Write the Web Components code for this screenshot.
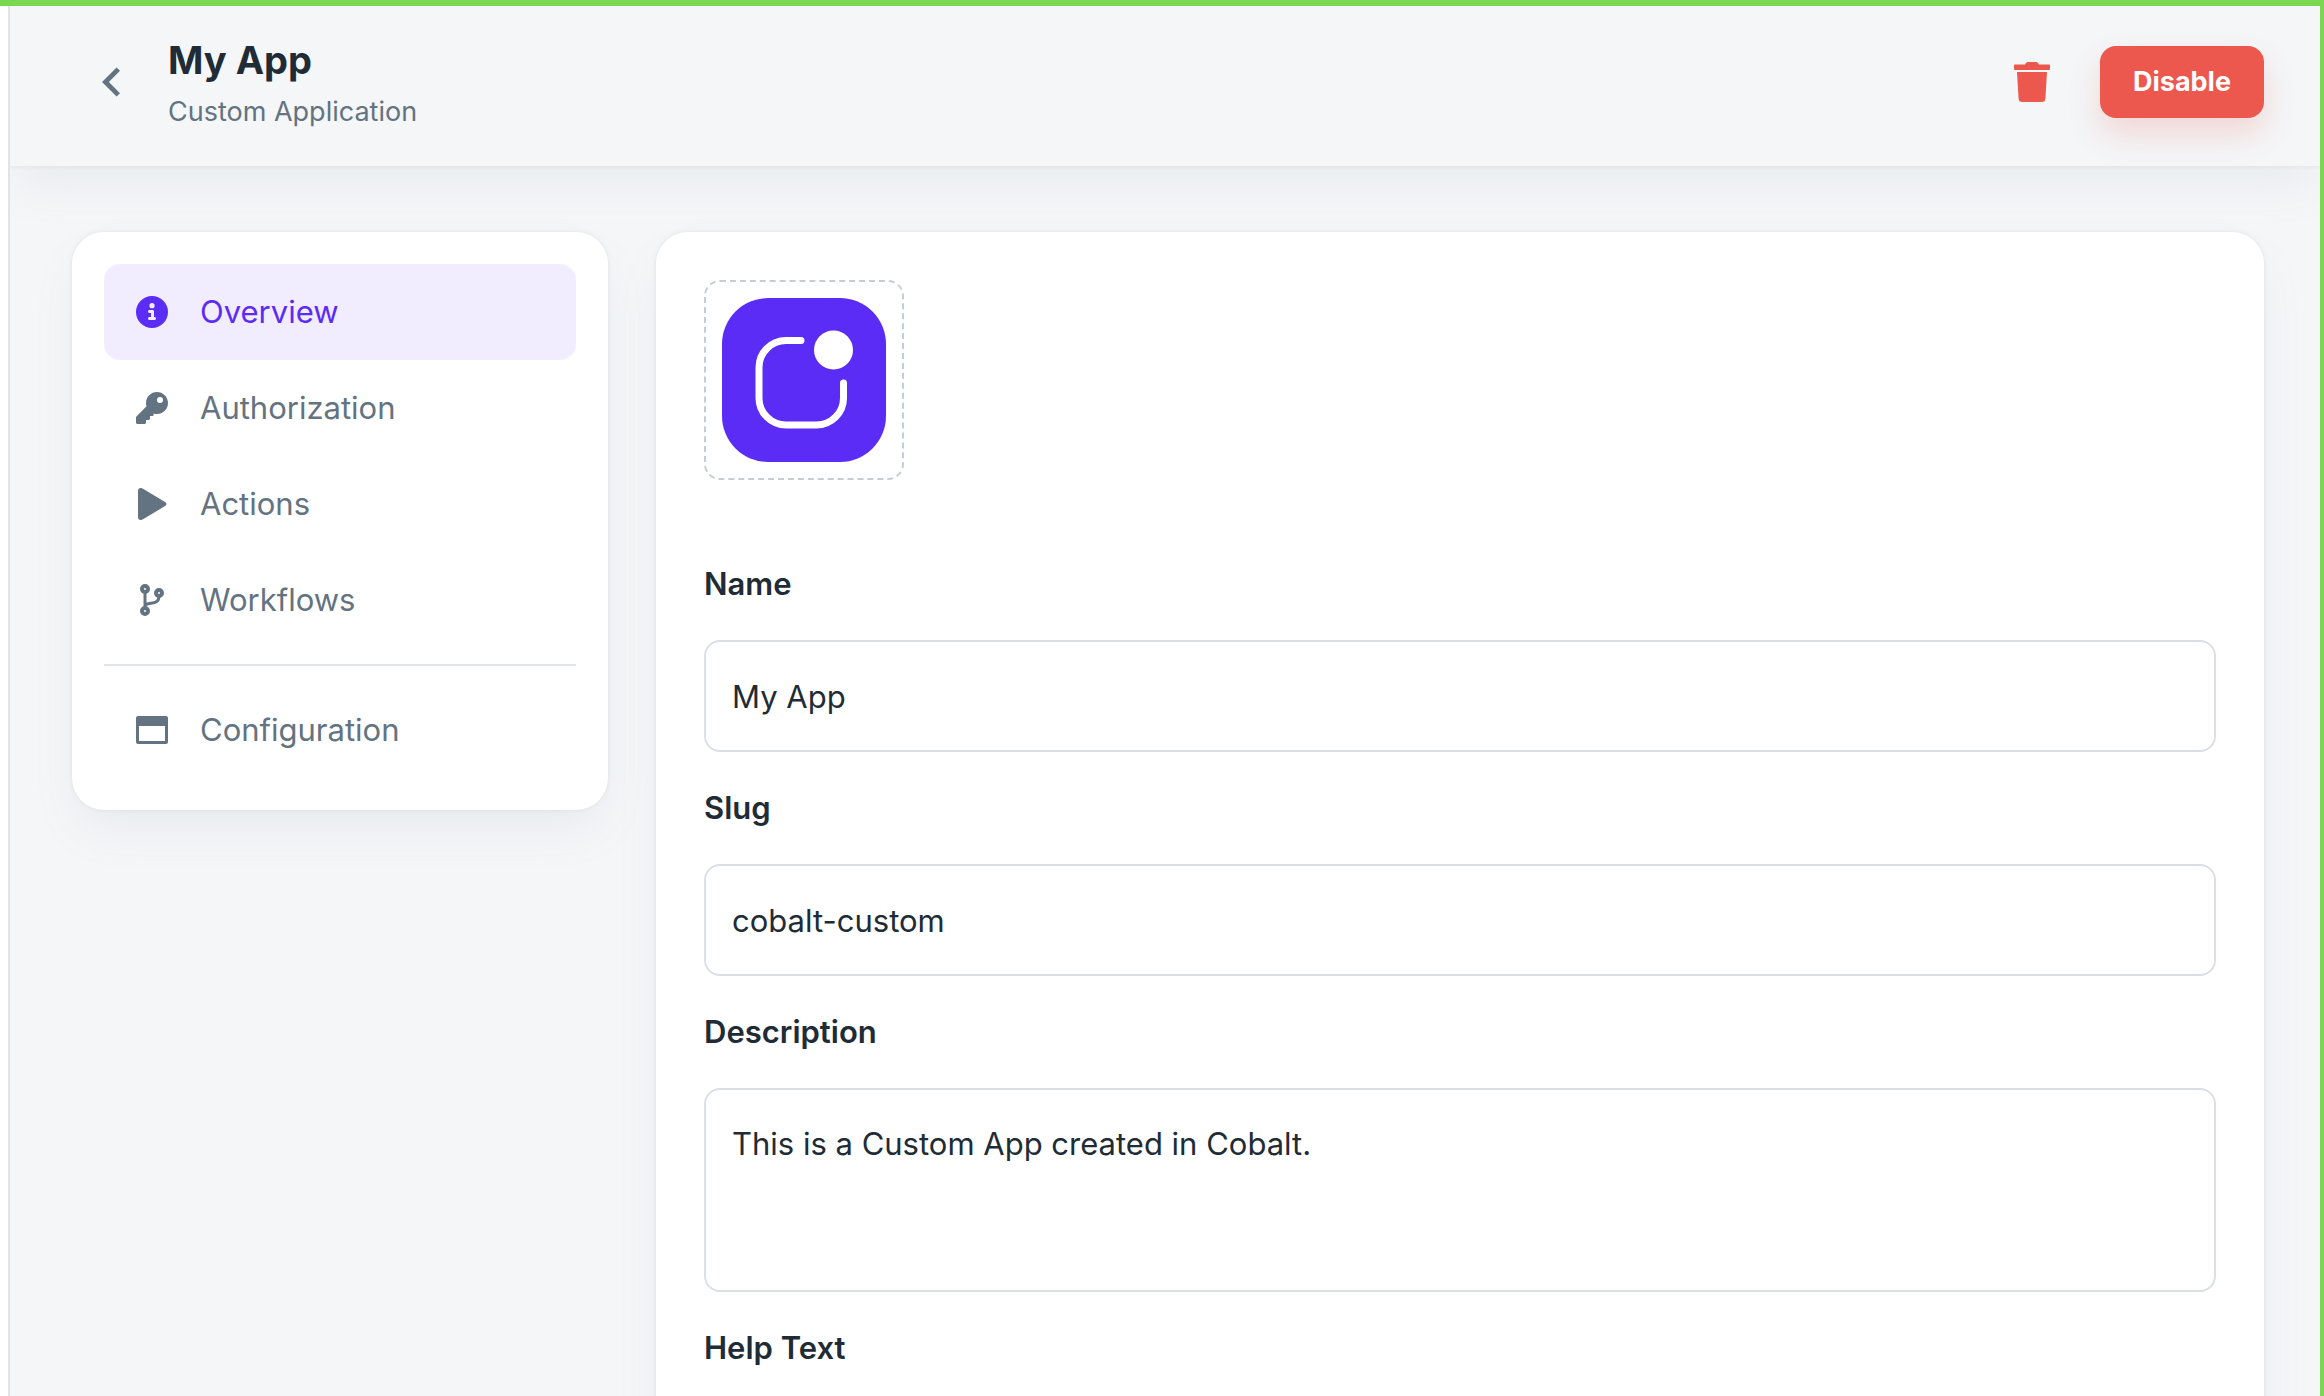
<!DOCTYPE html>
<html lang="en">
<head>
<meta charset="utf-8">
<title>My App</title>
<style>
  :root {
    --bg: #f4f6f8;
    --surface: #ffffff;
    --fg: #212b36;
    --fg-muted: #637381;
    --divider: #dfe4e9;
    --border: #dce0e4;
    --accent: #5b2cf6;
    --accent-soft: #f2edfe;
    --danger: #ec584d;
    --frame: #7bd651;
    --radius-md: 16px;
    --radius-lg: 32px;
    --shadow: 0 0 4px rgba(145, 158, 171, 0.2), 0 24px 48px -8px rgba(145, 158, 171, 0.12);
  }
  body {
    margin: 0;
    color: var(--fg);
    font-family: Inter, "Liberation Sans", sans-serif;
    font-size: 31px;
    line-height: 48px;
  }
</style>
</head>
<body>
<app-shell>
  <app-header slot="header" heading="My App" subheading="Custom Application"></app-header>
  <side-nav slot="nav">
    <nav-item icon="info" href="#overview" active>Overview</nav-item>
    <nav-item icon="key" href="#authorization">Authorization</nav-item>
    <nav-item icon="play" href="#actions">Actions</nav-item>
    <nav-item icon="branch" href="#workflows">Workflows</nav-item>
    <hr>
    <nav-item icon="window" href="#configuration">Configuration</nav-item>
  </side-nav>
  <app-form>
    <app-logo></app-logo>
    <text-field label="Name" value="My App"></text-field>
    <text-field label="Slug" value="cobalt-custom"></text-field>
    <text-field label="Description" value="This is a Custom App created in Cobalt." multiline></text-field>
    <text-field label="Help Text" value="" multiline></text-field>
  </app-form>
</app-shell>

<script>
const ICONS = {
  back: ['8 6 7.41 12', '<path d="M15.41 16.59 10.83 12l4.58-4.59L14 6l-6 6 6 6z"/>'],
  trash: ['0 0 36 40', '<path d="M1 2.500h10l1-1.500q.6-1 2-1h8q1.400 0 2 1l1 1.500h10q1 0 1 1v3.500q0 1-1 1H1Q0 8 0 7V3.500q0-1 1-1zM3 10h30l-1.600 26.500q-.3 3.500-3.500 3.500H8.100q-3.200 0-3.500-3.500z"/>'],
  info: ['0 0 512 512', '<path d="M256 512a256 256 0 1 0 0-512 256 256 0 1 0 0 512zM216 336h24v-64h-24c-13.300 0-24-10.700-24-24s10.700-24 24-24h48c13.300 0 24 10.700 24 24v88h8c13.300 0 24 10.700 24 24s-10.700 24-24 24h-80c-13.300 0-24-10.700-24-24s10.700-24 24-24zm40-224a42 42 0 1 1 0 84 42 42 0 1 1 0-84z"/>'],
  key: ['0 0 512 512', '<path d="M336 352c97.200 0 176-78.800 176-176S433.200 0 336 0 160 78.800 160 176c0 18.700 2.900 36.800 8.300 53.700L7 391c-4.500 4.500-7 10.600-7 17v80c0 13.300 10.700 24 24 24h112c13.300 0 24-10.700 24-24v-40h40c13.300 0 24-10.700 24-24v-40h40c6.400 0 12.500-2.500 17-7l1.300-33.300c16.900 5.400 35 8.300 53.700 8.300zm48-272a48 48 0 1 1 0 96 48 48 0 1 1 0-96z"/>'],
  play: ['0 0 32 32', '<path d="M2 3Q2 0 4.800 0 6 0 7 .7l22 13.200q3 2.100 0 4.200L7 31.300q-1 .7-2.200.7Q2 32 2 29z"/>'],
  branch: ['0 0 32 32', '<g fill="none" stroke="currentColor" stroke-width="4"><circle cx="9" cy="5" r="3"/><circle cx="23" cy="9" r="3"/><circle cx="9" cy="27" r="3"/><path stroke-width="3" d="M9 8v16M23 12c0 9-9 6-14 9"/></g>'],
  window: ['0 0 32 32', '<path fill-rule="evenodd" d="M2 2h28q2 0 2 2v24q0 2-2 2H2q-2 0-2-2V4q0-2 2-2zm1 10v15h26V12z"/>']
};

function icon(name) {
  const [box, shape] = ICONS[name];
  return `<svg viewBox="${box}" fill="currentColor" aria-hidden="true">${shape}</svg>`;
}

class AppShell extends HTMLElement {
  connectedCallback() {
    this.attachShadow({ mode: 'open' }).innerHTML = `
      <style>
        :host {
          display: block;
          box-sizing: border-box;
          height: 100vh;
          overflow: hidden;
          padding-left: 8px;
          border-top: 6px solid var(--frame);
          border-right: 4px solid var(--frame);
          background: var(--surface);
        }
        .page {
          height: 100%;
          overflow: hidden;
          border-left: 2px solid var(--divider);
          background: var(--bg);
        }
        main {
          display: grid;
          grid-template-columns: 536px minmax(0, 1fr);
          align-items: start;
          gap: 48px;
          padding: 66px 56px 66px 62px;
        }
      </style>
      <div class="page">
        <slot name="header"></slot>
        <main>
          <slot name="nav"></slot>
          <slot></slot>
        </main>
      </div>
    `;
  }
}

class AppHeader extends HTMLElement {
  connectedCallback() {
    this.attachShadow({ mode: 'open' }).innerHTML = `
      <style>
        :host {
          display: flex;
          align-items: center;
          box-sizing: border-box;
          height: 160px;
          padding: 0 56px 8px 62px;
          background: var(--bg);
          box-shadow: var(--shadow);
        }
        button {
          border: 0;
          padding: 0;
          background: none;
          font: inherit;
          cursor: pointer;
        }
        svg { display: block; }
        .back {
          padding: 16px 30px;
          color: var(--fg-muted);
        }
        .back svg { width: 18px; height: 30px; }
        .titles {
          flex: 1;
          padding: 4px 0 0 18px;
        }
        h1 {
          margin: 0;
          font-size: 38px;
          font-weight: 700;
          line-height: 56px;
        }
        p {
          margin: 0;
          color: var(--fg-muted);
          font-size: 27px;
          line-height: 48px;
        }
        .trash {
          padding: 16px 20px;
          margin-right: 30px;
          color: var(--danger);
        }
        .trash svg { width: 36px; height: 40px; }
        .disable {
          min-width: 164px;
          height: 72px;
          padding: 0 32px;
          border-radius: var(--radius-md);
          background: var(--danger);
          box-shadow: 0 16px 32px rgba(236, 88, 77, 0.2);
          color: #fff;
          font-size: 27px;
          font-weight: 700;
        }
      </style>
      <button class="back" aria-label="Back">${icon('back')}</button>
      <div class="titles">
        <h1>${this.getAttribute('heading')}</h1>
        <p>${this.getAttribute('subheading')}</p>
      </div>
      <button class="trash" aria-label="Delete">${icon('trash')}</button>
      <button class="disable">Disable</button>
    `;
  }
}

class SideNav extends HTMLElement {
  connectedCallback() {
    this.attachShadow({ mode: 'open' }).innerHTML = `
      <style>
        :host {
          display: block;
          padding: 32px;
          border-radius: var(--radius-lg);
          background: var(--surface);
          box-shadow: var(--shadow);
        }
        ::slotted(hr) {
          height: 2px;
          margin: 16px 0;
          border: 0;
          background: var(--divider);
        }
      </style>
      <nav><slot></slot></nav>
    `;
  }
}

class NavItem extends HTMLElement {
  connectedCallback() {
    this.attachShadow({ mode: 'open' }).innerHTML = `
      <style>
        :host { display: block; }
        a {
          display: flex;
          align-items: center;
          gap: 32px;
          padding: 24px 32px;
          border-radius: var(--radius-md);
          color: var(--fg-muted);
          text-decoration: none;
        }
        :host([active]) a {
          background: var(--accent-soft);
          color: var(--accent);
        }
        svg { width: 32px; height: 32px; }
      </style>
      <a href="${this.getAttribute('href')}">${icon(this.getAttribute('icon'))}<slot></slot></a>
    `;
  }
}

class AppForm extends HTMLElement {
  connectedCallback() {
    this.attachShadow({ mode: 'open' }).innerHTML = `
      <style>
        :host {
          display: block;
          padding: 48px;
          border-radius: var(--radius-lg);
          background: var(--surface);
          box-shadow: var(--shadow);
        }
        form {
          display: flex;
          flex-direction: column;
          gap: 32px;
        }
      </style>
      <form><slot></slot></form>
    `;
  }
}

class AppLogo extends HTMLElement {
  connectedCallback() {
    this.attachShadow({ mode: 'open' }).innerHTML = `
      <style>
        :host {
          display: block;
          align-self: flex-start;
          padding: 16px;
          margin-bottom: 48px;
          border: 2px dashed #c4cdd5;
          border-radius: var(--radius-md);
        }
        svg {
          display: block;
          width: 164px;
          height: 164px;
        }
      </style>
      <svg viewBox="0 0 164 164" role="img" aria-label="App logo">
        <rect width="164" height="164" rx="46" fill="#5b2cf6"/>
        <path fill="none" stroke="#fff" stroke-width="7" stroke-linecap="round" d="M79 42.500H64a27 27 0 0 0-27 27V100a27 27 0 0 0 27 27h30.500a27 27 0 0 0 27-27V85"/>
        <circle cx="111.500" cy="52" r="19.500" fill="#fff"/>
      </svg>
    `;
  }
}

class TextField extends HTMLElement {
  connectedCallback() {
    const multiline = this.hasAttribute('multiline');
    this.attachShadow({ mode: 'open' }).innerHTML = `
      <style>
        :host {
          display: flex;
          flex-direction: column;
          gap: 32px;
        }
        label { font-weight: 600; }
        input, textarea {
          display: block;
          box-sizing: border-box;
          width: 100%;
          margin: 0;
          padding: 30px 26px;
          border: 2px solid var(--border);
          border-radius: var(--radius-md);
          background: none;
          color: inherit;
          font: inherit;
          outline: none;
          resize: none;
        }
        input:focus, textarea:focus { border-color: var(--accent); }
        input { height: 112px; }
        textarea { height: 204px; }
      </style>
      <label for="field">${this.getAttribute('label')}</label>
      ${multiline ? '<textarea id="field"></textarea>' : '<input id="field" type="text">'}
    `;
    this.shadowRoot.getElementById('field').value = this.getAttribute('value');
  }
}

customElements.define('app-shell', AppShell);
customElements.define('app-header', AppHeader);
customElements.define('side-nav', SideNav);
customElements.define('nav-item', NavItem);
customElements.define('app-form', AppForm);
customElements.define('app-logo', AppLogo);
customElements.define('text-field', TextField);
</script>
</body>
</html>
